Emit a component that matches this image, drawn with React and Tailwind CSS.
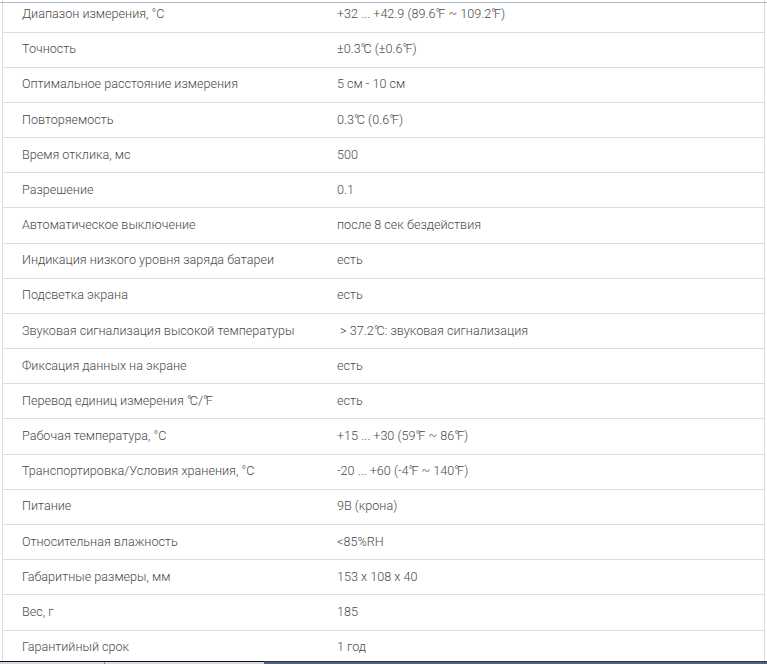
import React from "react";

// compact degree units, as the source font draws ℃ / ℉
const C = () => (
  <span className="whitespace-nowrap">
    <span className="tracking-[-0.15em]">°</span>C
  </span>
);
const F = () => (
  <span className="whitespace-nowrap">
    <span className="tracking-[-0.15em]">°</span>F
  </span>
);

const specs = [
  ["Диапазон измерения, °C", <>+32 ... +42.9 (89.6<F /> ~ 109.2<F />)</>],
  ["Точность", <>±0.3<C /> (±0.6<F />)</>],
  ["Оптимальное расстояние измерения", "5 см - 10 см"],
  ["Повторяемость", <>0.3<C /> (0.6<F />)</>],
  ["Время отклика, мс", "500"],
  ["Разрешение", "0.1"],
  ["Автоматическое выключение", "после 8 сек бездействия"],
  ["Индикация низкого уровня заряда батареи", "есть"],
  ["Подсветка экрана", "есть"],
  ["Звуковая сигнализация высокой температуры", <>{"\u00a0"}&gt; 37.2<C />: звуковая сигнализация</>],
  ["Фиксация данных на экране", "есть"],
  [<>Перевод единиц измерения <C />/<F /></>, "есть"],
  ["Рабочая температура, °C", <>+15 ... +30 (59<F /> ~ 86<F />)</>],
  ["Транспортировка/Условия хранения, °C", <>-20 ... +60 (-4<F /> ~ 140<F />)</>],
  ["Питание", "9В (крона)"],
  ["Относительная влажность", "<85%RH"],
  ["Габаритные размеры, мм", "153 x 108 x 40"],
  ["Вес, г", "185"],
  ["Гарантийный срок", "1 год"],
];

const SpecRow = ({ label, value }) => (
  <div className="grid grid-cols-[314px_1fr] h-[35.18px] items-center border-b border-[#dedede] box-border">
    <div className="pl-[19px]">{label}</div>
    <div className="pl-5">{value}</div>
  </div>
);

export default function App() {
  return (
    <div className="relative w-[767px] h-[664px] overflow-hidden bg-white font-['Roboto',sans-serif] font-light text-[12.6px] text-[#4a4a4a]">
      {/* spec table, scrolled a little so first row is cut */}
      <div className="ml-[2px] w-[763px] h-[661px] border-l border-r border-[#dcdcdc] overflow-hidden">
        <div className="-mt-[2.6px]">
          {specs.map(([label, value], i) => (
            <SpecRow key={i} label={label} value={value} />
          ))}
        </div>
      </div>

      {/* top header edge */}
      <div className="absolute left-0 right-0 top-[2px] h-px bg-[#aebdce]" />

      {/* bottom strip */}
      <div className="absolute left-0 right-0 bottom-0 h-[3px] flex">
        <div className="w-[264px] flex flex-col">
          <div className="h-px bg-[#111]" />
          <div className="flex-1 flex bg-[#d6d8db]">
            <div className="w-[105px] border-r border-[#8a8a8a]" />
          </div>
        </div>
        <div className="flex-1 flex flex-col">
          <div className="h-px bg-[#2b3850]" />
          <div className="flex-1 bg-[#52617e]" />
        </div>
      </div>
    </div>
  );
}
